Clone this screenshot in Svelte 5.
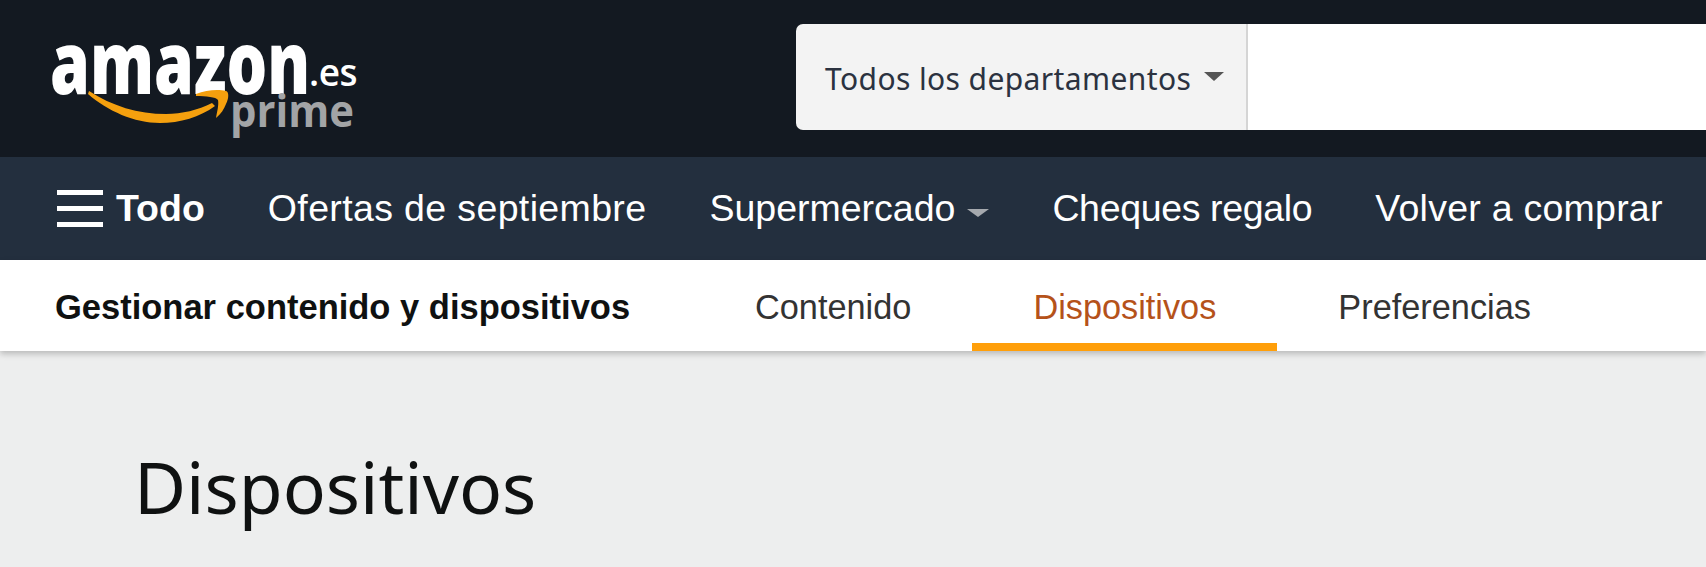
<script>
  const navItems = [
    { label: 'Ofertas de septiembre', spacing: 0.36 },
    { label: 'Supermercado', caret: true, spacing: 0 },
    { label: 'Cheques regalo', spacing: -0.35 },
    { label: 'Volver a comprar', spacing: 0.25 }
  ];

  const tabs = ['Contenido', 'Dispositivos', 'Preferencias'];
  const activeTab = 'Dispositivos';
</script>

<div class="page">
  <header class="top">
    <div class="logo">
      <span class="word">amazon</span>
      <span class="tld">.es</span>
      <span class="prime">prime</span>
      <svg class="smile" viewBox="0 0 142 36" width="142" height="36" aria-hidden="true">
        <path d="M1 2C24 17 50 25 78 25C94 25 110 21 124 14L127 17C112 28 92 34 72 34C46 34 20 22 0 5Z" fill="#f5a00e" />
        <path d="M108 5C118 1 130 0 138 2C141 3 141 9 138 15C136 20 133 25 128 29C129 23 131 16 130 11C128 8 118 7 108 7Z" fill="#f5a00e" />
      </svg>
    </div>
    <div class="search">
      <div class="dept">
        <span>Todos los departamentos</span>
        <i class="caret dark"></i>
      </div>
      <div class="field"></div>
    </div>
  </header>

  <nav class="main-nav">
    <div class="all">
      <div class="burger"><i></i><i></i><i></i></div>
      <b>Todo</b>
    </div>
    {#each navItems as item}
      <div class="nav-item" style="letter-spacing: {item.spacing}px">
        {item.label}{#if item.caret}<i class="caret grey"></i>{/if}
      </div>
    {/each}
  </nav>

  <div class="sub-nav">
    <div class="sub-title">Gestionar contenido y dispositivos</div>
    <div class="tabs">
      {#each tabs as tab}
        <div class="tab" class:active={tab === activeTab}>{tab}</div>
      {/each}
    </div>
  </div>

  <main class="content">
    <h1>Dispositivos</h1>
  </main>
</div>

<style>
  :global(body) {
    margin: 0;
    background: #edeeee;
  }

  .page {
    height: 567px;
    overflow: hidden;
    display: flex;
    flex-direction: column;
    background: #edeeee;
  }

  .top {
    height: 157px;
    flex: none;
    display: flex;
    align-items: flex-start;
    background: #131921;
  }

  .logo {
    position: relative;
    width: 796px;
    height: 157px;
    flex: none;
    color: #fff;
  }

  .word {
    position: absolute;
    left: 50px;
    top: 2px;
    font: 800 86px/118px "Open Sans", sans-serif;
    transform: scaleX(0.745);
    transform-origin: left center;
  }

  .tld {
    position: absolute;
    left: 309px;
    top: 48px;
    font: 600 37px/48px "Open Sans", sans-serif;
    letter-spacing: -0.5px;
  }

  .prime {
    position: absolute;
    left: 230px;
    top: 83px;
    font: 700 44px/54px "Open Sans", sans-serif;
    color: #a2a4a6;
    transform: scaleX(0.95);
    transform-origin: left center;
  }

  .smile {
    position: absolute;
    left: 88px;
    top: 89px;
  }

  .search {
    flex: 1;
    height: 106px;
    margin-top: 24px;
    display: flex;
    border-radius: 7px 0 0 7px;
    overflow: hidden;
  }

  .dept {
    width: 452px;
    flex: none;
    display: flex;
    align-items: center;
    gap: 13px;
    padding: 4px 0 0 29px;
    box-sizing: border-box;
    background: #f3f3f3;
    border-right: 2px solid #d5d5d5;
    color: #2b3240;
    font: 400 30px/1 "Noto Sans", sans-serif;
    letter-spacing: 0.4px;
  }

  .field {
    flex: 1;
    background: #fff;
  }

  .caret {
    display: inline-block;
    width: 0;
    height: 0;
    border-style: solid;
    border-color: transparent;
    border-width: 9px 10px 0;
  }

  .caret.dark {
    border-top-color: #555;
    margin-top: -6px;
  }

  .caret.grey {
    border-top-color: #a5a9ae;
    margin-left: 12px;
    border-width: 8px 11px 0;
    vertical-align: 4px;
  }

  .main-nav {
    height: 103px;
    flex: none;
    display: flex;
    align-items: center;
    gap: 63px;
    padding-left: 57px;
    box-sizing: border-box;
    background: #232f3e;
    color: #fff;
    font: 400 37.5px/1 "Liberation Sans", sans-serif;
    white-space: nowrap;
  }

  .all {
    display: flex;
    align-items: center;
    gap: 13px;
  }

  .all b {
    font-weight: 700;
  }

  .burger {
    width: 46px;
    display: flex;
    flex-direction: column;
    gap: 11px;
  }

  .burger i {
    height: 5px;
    background: #fff;
  }

  .sub-nav {
    height: 91px;
    flex: none;
    display: flex;
    padding-left: 55px;
    box-sizing: border-box;
    background: #fff;
    box-shadow: 0 3px 6px rgba(0, 0, 0, 0.22);
    position: relative;
  }

  .sub-title {
    width: 639px;
    flex: none;
    color: #0f1111;
    font: 700 34.5px/94px "Liberation Sans", sans-serif;
    white-space: nowrap;
  }

  .tabs {
    display: flex;
    font: 400 34.3px/94px "Liberation Sans", sans-serif;
    color: #333;
  }

  .tab {
    padding: 0 61px;
    height: 91px;
    box-sizing: border-box;
  }

  .tab.active {
    color: #b5521a;
    border-bottom: 8px solid #ff9f0a;
  }

  .content {
    padding: 0 0 0 134px;
  }

  h1 {
    margin: 0;
    padding-top: 94px;
    color: #0f1111;
    font: 400 71.4px/84px "Noto Sans", sans-serif;
  }
</style>
